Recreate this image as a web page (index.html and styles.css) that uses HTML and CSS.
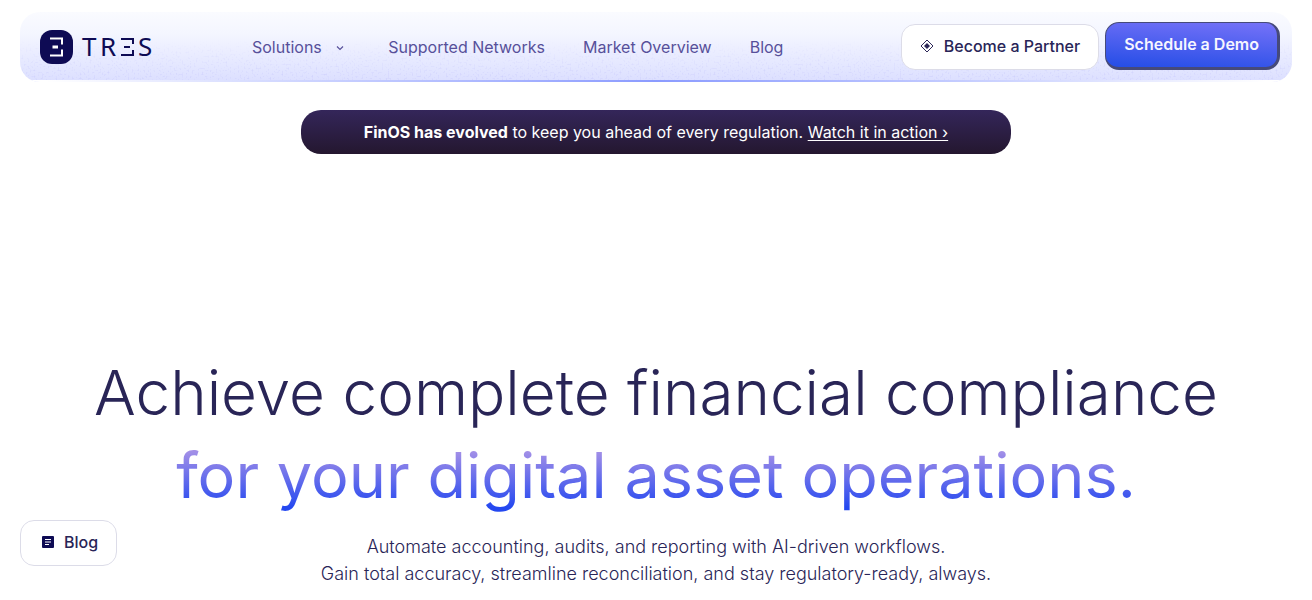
FILE: index.html
```html
<!DOCTYPE html>
<html lang="en">
<head>
    <meta charset="UTF-8">
    <meta name="viewport" content="width=device-width, initial-scale=1.0">
    <title>TRES</title>
    <link rel="stylesheet" href="styles.css">
</head>
<body>
    <header class="header">
        <svg class="grain" aria-hidden="true">
            <filter id="noise">
                <feTurbulence type="fractalNoise" baseFrequency="0.5" numOctaves="2" seed="4"/>
                <feColorMatrix values="0 0 0 0 0.5  0 0 0 0 0.5  0 0 0 0 0.95  4 0 0 0 -2.2"/>
            </filter>
            <rect width="100%" height="100%" filter="url(#noise)"/>
        </svg>
        <a class="logo" href="#" aria-label="TRES">
            <svg width="120" height="50" viewBox="0 -8 120 50">
                <rect width="33" height="34" rx="12" fill="#0e0b54"/>
                <g fill="none" stroke="#fff" stroke-width="2">
                    <path d="M10 8.500H22V14.500M22 19.500V25.500H10"/>
                    <path d="M12.500 17H18" stroke-width="3"/>
                </g>
                <g class="logo-text">
                    <text x="42" y="26">T</text>
                    <text x="60" y="26">R</text>
                    <text x="98" y="26">S</text>
                </g>
                <path d="M81 9H93V14M84 17H90M93 20V25H81" fill="none" stroke="#0e0b54" stroke-width="2"/>
            </svg>
        </a>
        <nav class="nav">
            <a href="#">Solutions
                <svg width="8" height="6" viewBox="0 0 8 6"><path d="M1 1.500L4 4.500L7 1.500" fill="none" stroke="currentColor" stroke-width="1.200"/></svg>
            </a>
            <a href="#">Supported Networks</a>
            <a href="#">Market Overview</a>
            <a href="#">Blog</a>
        </nav>
        <div class="actions">
            <a class="btn" href="#">
                <svg width="14" height="14" viewBox="0 0 14 14"><path d="M7 1L13 7L7 13L1 7Z" fill="none" stroke="#2d2858"/><path d="M7 4L10 7L7 10L4 7Z" fill="#2d2858"/></svg>
                Become a Partner
            </a>
            <a class="btn-demo" href="#">Schedule a Demo</a>
        </div>
    </header>

    <div class="banner">
        <p><strong>FinOS has evolved</strong> to keep you ahead of every regulation. <a href="#">Watch it in action ›</a></p>
    </div>

    <main class="hero">
        <h1>Achieve complete financial compliance <span>for your digital asset operations.</span></h1>
        <p>Automate accounting, audits, and reporting with AI-driven workflows.<br>Gain total accuracy, streamline reconciliation, and stay regulatory-ready, always.</p>
    </main>

    <a class="btn btn-blog" href="#">
        <svg width="12" height="12" viewBox="0 0 12 12"><rect width="12" height="12" rx="1" fill="#0e0b54"/><path d="M3 3.500H9M3 6H9M3 8.500H7" stroke="#fff" fill="none"/></svg>
        Blog
    </a>
</body>
</html>
```

FILE: styles.css
```css
* {
    box-sizing: border-box;
}
body {
    font-family: Inter, "Liberation Sans", sans-serif;
    font-size: 16px;
    margin: 0;
    padding: 12px 20px 0;
    background: #fff;
    color: #292557;
}
h1, p {
    margin: 0;
}
a {
    color: inherit;
    text-decoration: none;
}
.header {
    position: relative;
    display: flex;
    align-items: center;
    height: 70px;
    padding: 0 12px 0 20px;
    border-radius: 20px;
    overflow: hidden;
    background: linear-gradient(#fafbff, #f4f6ff 30%, #dcdfff);
}
.header::after {
    content: "";
    position: absolute;
    left: 0;
    right: 0;
    bottom: 0;
    height: 2px;
    background: linear-gradient(90deg, #fff 2%, #dfe3ff 15%, #8b9bff 50%, #dfe3ff 85%, #fff 98%);
}
.grain {
    position: absolute;
    left: 0;
    top: 0;
    width: 100%;
    height: 100%;
    opacity: 0.4;
    mask-image: linear-gradient(transparent 40%, #000);
}
.logo, .nav, .actions {
    position: relative;
    display: flex;
    align-items: center;
}
.logo-text {
    font: 26px "Noto Sans", sans-serif;
    fill: #0e0b54;
}
.nav {
    gap: 38px;
    margin-left: 92px;
    color: #57509a;
}
.nav svg {
    margin: 0 6px 2px 10px;
}
.actions {
    align-items: flex-end;
    gap: 6px;
    margin-left: auto;
    margin-bottom: 2px;
}
.btn {
    display: inline-flex;
    align-items: center;
    gap: 10px;
    height: 46px;
    padding: 0 18px 2px;
    border: 1px solid #dcdce8;
    border-radius: 14px;
    background: #fff;
    font-weight: 500;
    color: #292557;
}
.btn-demo {
    height: 48px;
    padding: 0 18px;
    border: 1px solid #464a7a;
    border-right-width: 3px;
    border-bottom-width: 3px;
    border-radius: 14px;
    background: linear-gradient(184deg, #7672f8, #244de6);
    color: #f6f6ff;
    font-weight: 600;
    line-height: 43px;
}
.banner {
    width: 710px;
    max-width: 100%;
    margin: 28px auto 0;
    padding: 10px 20px;
    border-radius: 20px;
    background: linear-gradient(#34265a, #24172f);
    color: #fff;
    line-height: 24px;
    text-align: center;
}
.banner a {
    text-decoration: underline;
    text-underline-offset: 2px;
}
.hero {
    padding-top: 198px;
    text-align: center;
}
.hero h1 {
    font-size: 62px;
    font-weight: 300;
    line-height: 82px;
}
.hero h1 span {
    display: block;
    font-size: 63px;
    font-weight: 400;
    background: linear-gradient(#b79be6 10%, #2448f0 90%);
    background-clip: text;
    color: transparent;
}
.hero p {
    margin-top: 17px;
    font-size: 18px;
    font-weight: 300;
    line-height: 27px;
}
.btn-blog {
    position: fixed;
    left: 20px;
    bottom: 34px;
    padding: 0 18px 2px 21px;
}
```
